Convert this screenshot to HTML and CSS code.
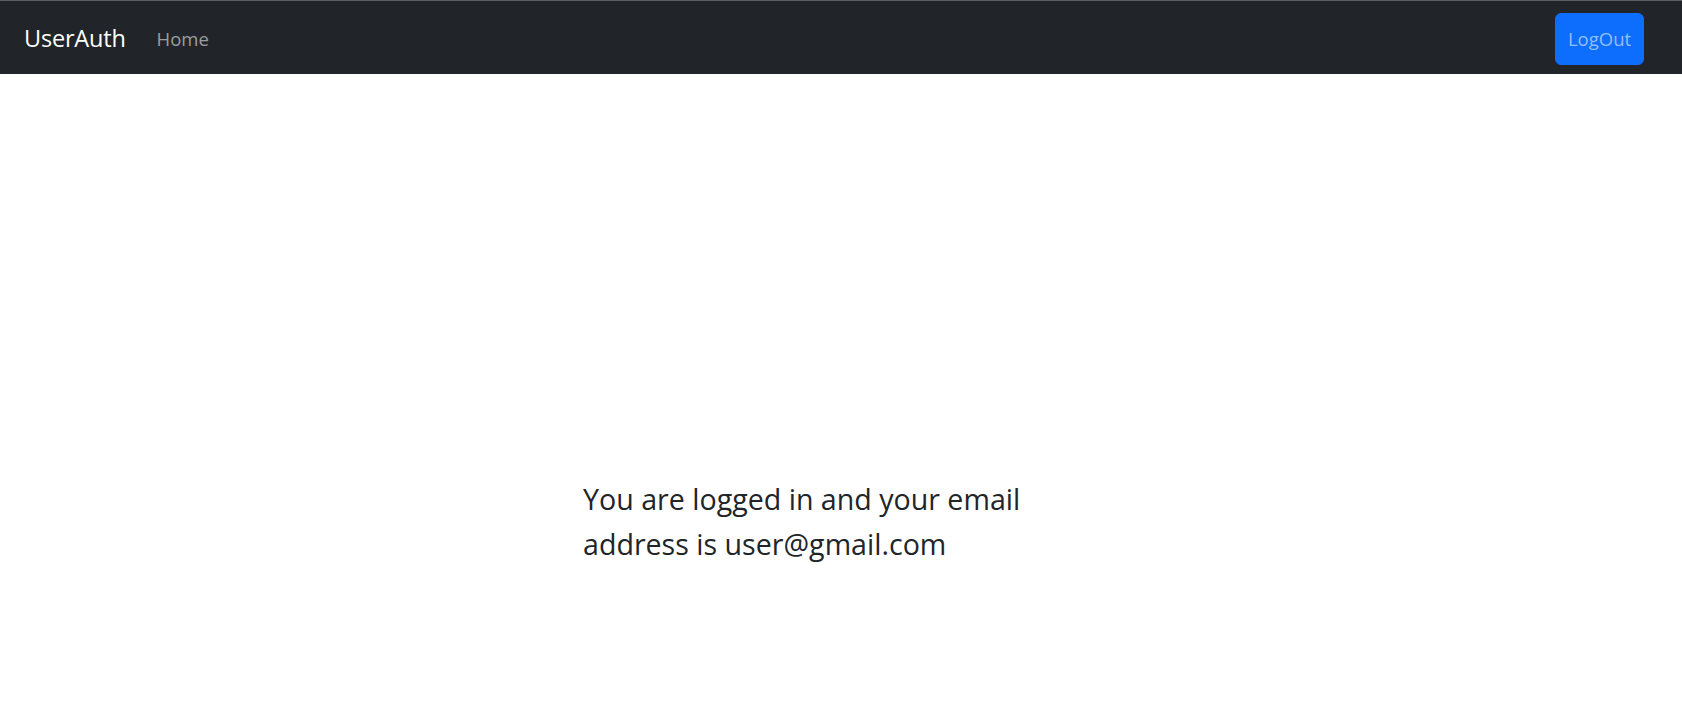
FILE: index.html
```html
<!DOCTYPE html>
<html lang="en">
<head>
<meta charset="utf-8">
<title>UserAuth</title>
<link rel="stylesheet" href="styles.css">
</head>
<body>
<nav class="navbar">
  <div class="nav-left">
    <a class="brand" href="#">UserAuth</a>
    <a class="nav-link" href="#">Home</a>
  </div>
  <button class="btn-logout" type="button">LogOut</button>
</nav>
<main class="content">
  <div class="col">
    <p class="message">You are logged in and your email address is user@gmail.com</p>
  </div>
</main>
</body>
</html>
```

FILE: styles.css
```css
* { box-sizing: border-box; }
html, body { margin: 0; padding: 0; }
body {
  font-family: "Open Sans", "Noto Sans", sans-serif;
  background: #ffffff;
  color: #212529;
}
.navbar {
  height: 74px;
  background: #212529;
  border-top: 1px solid #5b5d60;
  display: flex;
  align-items: center;
  justify-content: space-between;
  padding: 0 38px 0 24px;
}
.nav-left {
  display: flex;
  align-items: center;
  gap: 31px;
}
.brand {
  color: #ffffff;
  text-decoration: none;
  font-size: 23.5px;
  letter-spacing: -0.2px;
}
.nav-link {
  color: #9b9d9f;
  text-decoration: none;
  font-size: 18.5px;
  padding-top: 2px;
}
.btn-logout {
  width: 89px;
  height: 52px;
  background: #0d6efd;
  border: 1px solid #0d6efd;
  border-radius: 6px;
  color: #92befe;
  font-family: "Open Sans", "Noto Sans", sans-serif;
  font-size: 18.5px;
  padding: 0;
  margin-top: 2px;
}
.content {
  padding-top: 402px;
  display: flex;
  justify-content: flex-start;
  padding-left: 583px;
}
.col {
  width: 520px;
}
.message {
  margin: 0;
  font-size: 28.6px;
  line-height: 45px;
  color: #212529;
}
```
